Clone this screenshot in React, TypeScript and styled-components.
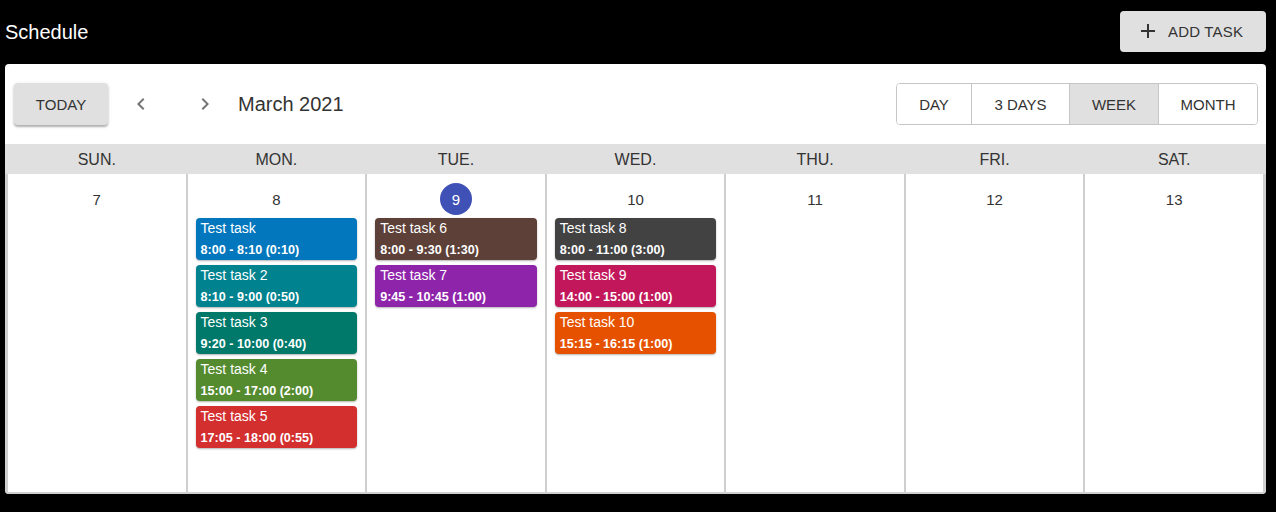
import React from "react";
import styled, { createGlobalStyle } from "styled-components";

const Global = createGlobalStyle`
  html, body { margin: 0; padding: 0; background: #000; }
  body { font-family: "Liberation Sans", Arial, sans-serif; }
  * { box-sizing: border-box; }
`;

const Page = styled.div`
  width: 1276px;
  height: 512px;
  background: #000;
  padding: 0 10px 0 5px;
  display: flex;
  flex-direction: column;
`;

const TopBar = styled.div`
  height: 64px;
  display: flex;
  align-items: center;
  justify-content: space-between;
`;

const Title = styled.h1`
  margin: 0;
  color: #fff;
  font-size: 20px;
  font-weight: 400;
  line-height: 1;
  margin-top: -1px;
`;

const AddButton = styled.button`
  height: 41px;
  width: 146px;
  margin-top: -2px;
  border: none;
  border-radius: 4px;
  background: #e0e0e0;
  color: #333;
  font-family: inherit;
  font-size: 15px;
  letter-spacing: 0.2px;
  display: flex;
  align-items: center;
  justify-content: flex-start;
  gap: 8px;
  padding: 0 0 0 16px;
  text-transform: uppercase;
`;

const Card = styled.div`
  background: #fff;
  border-radius: 4px;
  height: 430px;
  display: flex;
  flex-direction: column;
  overflow: hidden;
`;

const Toolbar = styled.div`
  height: 80px;
  display: flex;
  align-items: center;
  padding: 0 8px 0 9px;
`;

const TodayButton = styled.button`
  width: 94px;
  height: 42px;
  border: none;
  border-radius: 4px;
  background: #e0e0e0;
  color: #333;
  font-family: inherit;
  font-size: 15px;
  box-shadow: 0 2px 2px rgba(0,0,0,0.25), 0 1px 4px rgba(0,0,0,0.12);
  text-transform: uppercase;
`;

const NavButton = styled.button<{ $ml: number }>`
  width: 48px;
  height: 42px;
  border: none;
  background: transparent;
  display: flex;
  align-items: center;
  justify-content: center;
  padding: 0;
  margin-left: ${p => p.$ml}px;
`;

const MonthLabel = styled.div`
  font-size: 20px;
  color: #333;
  margin-left: 9px;
`;

const Spacer = styled.div` flex: 1; `;

const Switcher = styled.div`
  display: flex;
  height: 42px;
  border: 1px solid #c6c6c6;
  border-radius: 4px;
  overflow: hidden;
`;

const SwitchItem = styled.div<{ $w: number; $active?: boolean }>`
  width: ${p => p.$w}px;
  display: flex;
  align-items: center;
  justify-content: center;
  font-size: 15px;
  color: #333;
  background: ${p => (p.$active ? "#e0e0e0" : "#fff")};
  & + & { border-left: 1px solid #c6c6c6; }
`;

const HeaderRow = styled.div`
  display: grid;
  grid-template-columns: repeat(7, 1fr);
  gap: 2px;
  background: #e0e0e0;
  height: 30px;
  padding: 0 3px;
`;

const HeaderCell = styled.div`
  display: flex;
  align-items: center;
  justify-content: center;
  font-size: 16px;
  color: #333;
  padding-top: 1px;
`;

const Body = styled.div`
  flex: 1;
  display: grid;
  grid-template-columns: repeat(7, 1fr);
  gap: 2px;
  background: #cfcfcf;
  padding: 0 3px 2px 3px;
`;

const DayCell = styled.div`
  background: #fff;
  display: flex;
  flex-direction: column;
  padding: 9px 8px 0 8px;
`;

const DayNum = styled.div<{ $today?: boolean }>`
  align-self: center;
  width: 32px;
  height: 32px;
  border-radius: 50%;
  display: flex;
  align-items: center;
  justify-content: center;
  font-size: 15px;
  color: ${p => (p.$today ? "#fff" : "#333")};
  background: ${p => (p.$today ? "#3f51b5" : "transparent")};
  margin-bottom: 3px;
`;

const Tasks = styled.div`
  display: flex;
  flex-direction: column;
  gap: 5px;
`;

const Task = styled.div<{ $c: string }>`
  background: ${p => p.$c};
  border-radius: 4px;
  height: 42px;
  color: #fff;
  padding: 2px 5px 0 5px;
  box-shadow: 0 1px 2px rgba(0,0,0,0.3);
`;

const TaskTitle = styled.div`
  font-size: 14px;
  line-height: 16px;
`;

const TaskTime = styled.div`
  font-size: 12.6px;
  font-weight: 700;
  line-height: 14px;
  margin-top: 7px;
`;

type T = { title: string; time: string; color: string };

const days: { name: string; num: number; today?: boolean; tasks: T[] }[] = [
  { name: "SUN.", num: 7, tasks: [] },
  {
    name: "MON.", num: 8, tasks: [
      { title: "Test task", time: "8:00 - 8:10 (0:10)", color: "#0277bd" },
      { title: "Test task 2", time: "8:10 - 9:00 (0:50)", color: "#00838f" },
      { title: "Test task 3", time: "9:20 - 10:00 (0:40)", color: "#00796b" },
      { title: "Test task 4", time: "15:00 - 17:00 (2:00)", color: "#558b2f" },
      { title: "Test task 5", time: "17:05 - 18:00 (0:55)", color: "#d32f2f" },
    ],
  },
  {
    name: "TUE.", num: 9, today: true, tasks: [
      { title: "Test task 6", time: "8:00 - 9:30 (1:30)", color: "#5d4037" },
      { title: "Test task 7", time: "9:45 - 10:45 (1:00)", color: "#8e24aa" },
    ],
  },
  {
    name: "WED.", num: 10, tasks: [
      { title: "Test task 8", time: "8:00 - 11:00 (3:00)", color: "#424242" },
      { title: "Test task 9", time: "14:00 - 15:00 (1:00)", color: "#c2185b" },
      { title: "Test task 10", time: "15:15 - 16:15 (1:00)", color: "#e65100" },
    ],
  },
  { name: "THU.", num: 11, tasks: [] },
  { name: "FRI.", num: 12, tasks: [] },
  { name: "SAT.", num: 13, tasks: [] },
];

const Chevron = ({ dir }: { dir: "left" | "right" }) => (
  <svg width="24" height="24" viewBox="0 0 24 24">
    <path
      d={dir === "left" ? "M15.41 7.41 14 6l-6 6 6 6 1.41-1.41L10.83 12z" : "M10 6 8.59 7.41 13.17 12l-4.58 4.59L10 18l6-6z"}
      fill="#757575"
    />
  </svg>
);

const Plus = () => (
  <svg width="24" height="24" viewBox="0 0 24 24">
    <path d="M19 13h-6v6h-2v-6H5v-2h6V5h2v6h6v2z" fill="#333" />
  </svg>
);

export default function App() {
  return (
    <>
      <Global />
      <Page>
        <TopBar>
          <Title>Schedule</Title>
          <AddButton><Plus />Add task</AddButton>
        </TopBar>
        <Card>
          <Toolbar>
            <TodayButton>Today</TodayButton>
            <NavButton $ml={9}><Chevron dir="left" /></NavButton>
            <NavButton $ml={16}><Chevron dir="right" /></NavButton>
            <MonthLabel>March 2021</MonthLabel>
            <Spacer />
            <Switcher>
              <SwitchItem $w={74}>DAY</SwitchItem>
              <SwitchItem $w={98}>3 DAYS</SwitchItem>
              <SwitchItem $w={89} $active>WEEK</SwitchItem>
              <SwitchItem $w={99}>MONTH</SwitchItem>
            </Switcher>
          </Toolbar>
          <HeaderRow>
            {days.map(d => <HeaderCell key={d.name}>{d.name}</HeaderCell>)}
          </HeaderRow>
          <Body>
            {days.map(d => (
              <DayCell key={d.name}>
                <DayNum $today={d.today}>{d.num}</DayNum>
                <Tasks>
                  {d.tasks.map(t => (
                    <Task key={t.title} $c={t.color}>
                      <TaskTitle>{t.title}</TaskTitle>
                      <TaskTime>{t.time}</TaskTime>
                    </Task>
                  ))}
                </Tasks>
              </DayCell>
            ))}
          </Body>
        </Card>
      </Page>
    </>
  );
}
